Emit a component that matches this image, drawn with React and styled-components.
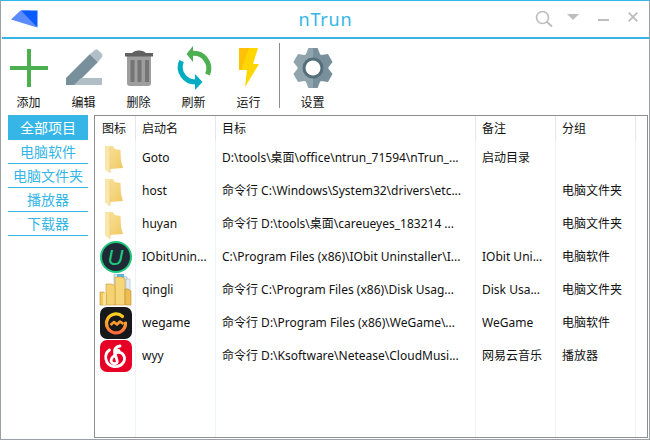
import React from 'react';
import styled, { createGlobalStyle } from 'styled-components';

const Global = createGlobalStyle`
  html, body { margin: 0; padding: 0; width: 650px; height: 440px; overflow: hidden; background: #fff; }
  * { box-sizing: border-box; }
`;

const BLUE = '#35b6e7';
const FONT = '"Noto Sans", "Noto Sans CJK SC", sans-serif';

const Win = styled.div`
  width: 650px; height: 440px; background: #fff;
  border: 1px solid #9aa0a6; border-top: 1px solid ${BLUE};
  display: flex; flex-direction: column; font-family: ${FONT}; font-size: 12px; color: #111;
`;
const TitleBar = styled.header`
  flex: none; margin-left: 1px; display: grid; grid-template-columns: 1fr auto 1fr; align-items: center;
  border-bottom: 2px solid ${BLUE}; height: 38px;
`;
const Logo = styled.svg`width: 28px; height: 18px; margin: 0 0 0 8px; display: block;`;
const Title = styled.h1`
  margin: 0; font: 400 18px ${FONT}; color: ${BLUE}; letter-spacing: 0.8px;
`;
const WinControls = styled.div`display: flex; justify-content: flex-end; align-items: flex-start; height: 100%;`;
const CtrlIcon = styled.svg`
  display: block; flex: none;
  margin-top: ${p => p.$top}px; margin-left: ${p => p.$left || 0}px; margin-right: ${p => p.$right || 0}px;
`;
const Toolbar = styled.nav`
  flex: none; height: 76px; display: flex; align-items: stretch;
`;
const ToolBtn = styled.button`
  all: unset; width: 55px; display: flex; flex-direction: column; align-items: center; padding-top: 9px;
  font: 12px ${FONT}; color: #111; cursor: pointer;
`;
const ToolIcon = styled.svg`width: 40px; height: 40px; overflow: visible; display: block; flex: none;`;
const ToolLabel = styled.span`margin-top: 6px; line-height: 18px;`;
const Divider = styled.div`width: 1px; background: #8c8c8c; margin: 4px 5px 7px 3px;`;
const Body = styled.main`flex: 1; min-height: 0; display: flex; padding: 0 1px 1px 7px; gap: 6px;`;
const Side = styled.aside`width: 80px; flex: none; display: flex; flex-direction: column;`;
const SideItem = styled.div`
  text-align: center; font-size: 14px; flex: none;
  height: ${p => (p.$active ? '25px' : '24px')};
  line-height: ${p => (p.$active ? '25px' : '24px')};
  color: ${p => (p.$active ? '#fff' : BLUE)};
  background: ${p => (p.$active ? BLUE : 'transparent')};
  border-bottom: ${p => (p.$active ? 'none' : `1px solid ${BLUE}`)};
`;
const List = styled.section`
  flex: 1; min-width: 0; border: 1px solid #8f8f8f; position: relative; overflow: hidden;
`;
const cols = '41px 80px 260px 80px 80px 10px';
const Row = styled.div`
  display: grid; grid-template-columns: ${cols}; height: 33px; align-items: stretch;
`;
const Cell = styled.div`
  padding-left: 6px; display: flex; align-items: center; white-space: nowrap; overflow: hidden;
  border-right: 1px solid #edf3f8; line-height: 18px; padding-top: 1px;
  &:last-child { border-right: none; }
`;
const IconCell = styled(Cell)`padding: 0 0 0 5px;`;
const HeaderRow = styled(Row)`height: 25px;`;
const HeaderCell = styled(Cell)`border-right-color: #e4e8ec; padding-top: 0; ${p => p.$first && 'padding-left: 7px;'}`;
const Rules = styled.div`
  display: grid; grid-template-columns: ${cols}; position: absolute; left: 0; right: 0; top: 25px; bottom: 0; pointer-events: none;
`;
const Rule = styled.div`border-right: 1px solid #edf3f8; &:last-child { border-right: none; }`;
const ListIcon = styled.svg`width: 32px; height: 32px; display: block; flex: none; overflow: visible;`;

const gearPath = (() => {
  const c = 20, pts = [];
  for (let i = 0; i < 6; i++) {
    const a = (-90 + i * 60) * Math.PI / 180;
    const p = (r, d) => { const t = a + d * Math.PI / 180; return `${(c + r * Math.cos(t)).toFixed(2)} ${(c + r * Math.sin(t)).toFixed(2)}`; };
    pts.push(p(15.5, -27), p(20.5, -13), p(20.5, 13), p(15.5, 27));
  }
  return 'M' + pts.join('L') + 'Z';
})();

const AddIcon = () => (
  <ToolIcon viewBox="0 0 40 40"><path d="M18 1h4v38h-4zM1 18h38v4H1z" fill="#4caf50" /></ToolIcon>
);
const EditIcon = () => (
  <ToolIcon viewBox="0 0 40 40">
    <path d="M2 30h36v7H2z" fill="#b0bec5" />
    <path d="M2 30h15l-7 7H2z" fill="#78909c" />
    <path d="M2 30 26 6l8 8-16 16z" fill="#78909c" />
    <path d="M26 6l5-4c1-.6 2-.6 3 0l4 4c.6 1 .6 2 0 3l-4 5z" fill="#b0bec5" />
  </ToolIcon>
);
const TrashIcon = () => (
  <ToolIcon viewBox="0 0 40 40">
    <path d="M8 8h24v27a3 3 0 0 1-3 3H11a3 3 0 0 1-3-3z" fill="#9e9e9e" />
    <path d="M11.500 12h4v22h-4zM18.500 12h4v22h-4zM26 12h4v22h-4z" fill="#757575" />
    <path d="M6 5h7q2-2.500 6-2.500h2q4 0 6 2.500h7v3.500H6z" fill="#616161" />
  </ToolIcon>
);
const RefreshIcon = () => (
  <ToolIcon viewBox="0 0 40 40">
    <path d="M18 5.500A15 15 0 0 1 33.500 26.500" fill="none" stroke="#4caf50" strokeWidth="5" />
    <path d="M12.500 6 19 -2V14z" fill="#4caf50" />
    <path d="M22 34A15 15 0 0 1 7.500 13" fill="none" stroke="#00acc1" strokeWidth="5" />
    <path d="M28.500 34 21 26V42z" fill="#00acc1" />
  </ToolIcon>
);
const BoltIcon = () => (
  <ToolIcon viewBox="0 0 40 40">
    <path d="M10 0H29L24 16H30L16 39 18 22H10z" fill="#ffd600" />
    <path d="M10 0H20L12 22H10z" fill="#ffc107" />
  </ToolIcon>
);
const GearIcon = () => (
  <ToolIcon viewBox="0 0 40 40">
    <defs>
      <linearGradient id="gearFill" x1="0" x2="1" y1="0" y2="0">
        <stop offset="0.5" stopColor="#90a4ae" /><stop offset="0.5" stopColor="#78909c" />
      </linearGradient>
    </defs>
    <path d={gearPath} fill="url(#gearFill)" />
    <circle cx="20" cy="20" r="10.500" fill="#546e7a" />
    <circle cx="20" cy="20" r="7.500" fill="#fff" />
  </ToolIcon>
);

const FolderIcon = () => (
  <ListIcon viewBox="0 0 32 32">
    <defs>
      <linearGradient id="fold" x1="0" x2="1" y1="0" y2="1">
        <stop offset="0" stopColor="#fbe49c" /><stop offset="1" stopColor="#efc660" />
      </linearGradient>
    </defs>
    <path d="M5 4H13L14.500 7 20.500 8 21 19 23 26 10 27V31L5 27z" fill="url(#fold)" />
    <path d="M5 4H10V31L5 27z" fill="#fae6a8" />
    <path d="M10 5V31" stroke="#e8c878" strokeWidth="0.600" />
  </ListIcon>
);
const IObitIcon = () => (
  <ListIcon viewBox="0 0 32 32">
    <circle cx="16" cy="16" r="15" fill="#1f2a36" stroke="#20c67a" strokeWidth="2" />
    <text x="15.500" y="23.500" textAnchor="middle" fontFamily="Liberation Sans, sans-serif" fontStyle="italic" fontSize="22" fill="#1fca7c">U</text>
  </ListIcon>
);
const ClusterIcon = () => (
  <ListIcon viewBox="0 0 32 32">
    <path d="M14 0l13 3v14H14z" fill="#d8e8f0" stroke="#93aebc" strokeWidth="0.600" />
    <path d="M17 0h7v5h-7z" fill="#5fb4d8" />
    <path d="M26 5h4v20h-4z" fill="#e6eef3" stroke="#93aebc" strokeWidth="0.500" />
    <path d="M15 3h7l3 2v26H15z" fill="#f7d67a" stroke="#c79a3c" strokeWidth="0.600" />
    <path d="M25 15h3l3 2v14h-6z" fill="#eebd50" stroke="#b98e30" strokeWidth="0.600" />
    <path d="M6 10h6l3 2v19H6z" fill="#f5d272" stroke="#c79a3c" strokeWidth="0.600" />
    <path d="M0 18h3l3 1.500V31H0z" fill="#f2c95e" stroke="#b98e30" strokeWidth="0.600" />
    <path d="M3 19.500 6 18V31H3z" fill="#f9e299" />
  </ListIcon>
);
const WeGameIcon = () => (
  <ListIcon viewBox="0 0 32 32">
    <defs>
      <linearGradient id="wg" x1="0" x2="0" y1="0" y2="1">
        <stop offset="0" stopColor="#ffd21f" /><stop offset="1" stopColor="#ff6a3c" />
      </linearGradient>
    </defs>
    <rect width="32" height="32" rx="7" fill="#17181a" />
    <path d="M22.500 9.500A9.500 9.500 0 1 0 25.500 16" fill="none" stroke="url(#wg)" strokeWidth="3.200" strokeLinecap="round" />
    <path d="M10.500 18l3.500-3 3 2.500 3-3 3.500 2.500" fill="none" stroke="#ff9a2e" strokeWidth="2.600" strokeLinejoin="round" />
  </ListIcon>
);
const MusicIcon = () => (
  <ListIcon viewBox="0 0 32 32">
    <rect width="32" height="32" rx="7" fill="#e60026" />
    <path d="M20 6c-4.500 .8-6 3.500-5.300 6.500l2.500 8.500c.8 2.500-3.800 3.800-5.500 1.300-1.500-2.300.2-5.500 3-6.500"
      fill="none" stroke="#fff" strokeWidth="2.800" strokeLinecap="round" />
    <path d="M9.500 10c-6 4-5 15 4.500 16.500 8 1 12.500-6 9.500-11.500-2.500-3.800-8-3-8.800-.5M14.700 12.500c.6-2.500 4-3.200 4.800-.8"
      fill="none" stroke="#fff" strokeWidth="2.800" strokeLinecap="round" />
  </ListIcon>
);

const tools = [
  ['添加', AddIcon], ['编辑', EditIcon], ['删除', TrashIcon], ['刷新', RefreshIcon], ['运行', BoltIcon],
];
const rows = [
  [FolderIcon, 'Goto', 'D:\\tools\\桌面\\office\\ntrun_71594\\nTrun_...', '启动目录', ''],
  [FolderIcon, 'host', '命令行 C:\\Windows\\System32\\drivers\\etc...', '', '电脑文件夹'],
  [FolderIcon, 'huyan', '命令行 D:\\tools\\桌面\\careueyes_183214 ...', '', '电脑文件夹'],
  [IObitIcon, 'IObitUnin...', 'C:\\Program Files (x86)\\IObit Uninstaller\\I...', 'IObit Uni...', '电脑软件'],
  [ClusterIcon, 'qingli', '命令行 C:\\Program Files (x86)\\Disk Usag...', 'Disk Usa...', '电脑文件夹'],
  [WeGameIcon, 'wegame', '命令行 D:\\Program Files (x86)\\WeGame\\...', 'WeGame', '电脑软件'],
  [MusicIcon, 'wyy', '命令行 D:\\Ksoftware\\Netease\\CloudMusi...', '网易云音乐', '播放器'],
];
const groups = ['全部项目', '电脑软件', '电脑文件夹', '播放器', '下载器'];

export default function App() {
  return (
    <Win>
      <Global />
      <TitleBar>
        <Logo viewBox="0 0 28 18">
          <path d="M1 9.500 10.500 0.500H20L27 17.500z" fill="#5b8cff" />
          <path d="M11 0.500H27.500V17.500z" fill="#0a5cff" />
        </Logo>
        <Title>nTrun</Title>
        <WinControls>
          <CtrlIcon $top={9} width="18" height="18" viewBox="0 0 18 18">
            <circle cx="7.500" cy="7.500" r="6" fill="none" stroke="#bdbdbd" strokeWidth="1.600" />
            <path d="M11.800 11.800 17 16.500" stroke="#bdbdbd" strokeWidth="2" />
          </CtrlIcon>
          <CtrlIcon $top={13} $left={14} width="12" height="6" viewBox="0 0 12 6">
            <path d="M0 0H12L6 6z" fill="#bdbdbd" />
          </CtrlIcon>
          <CtrlIcon $top={18} $left={19} width="11" height="2" viewBox="0 0 11 2">
            <path d="M0 0H11V2H0z" fill="#bdbdbd" />
          </CtrlIcon>
          <CtrlIcon $top={11} $left={19} $right={11} width="10" height="10" viewBox="0 0 10 10">
            <path d="M.7 .7 9.300 9.300M9.300 .7 .7 9.300" stroke="#bdbdbd" strokeWidth="1.800" />
          </CtrlIcon>
        </WinControls>
      </TitleBar>
      <Toolbar>
        {tools.map(([label, Icon]) => (
          <ToolBtn key={label}><Icon /><ToolLabel>{label}</ToolLabel></ToolBtn>
        ))}
        <Divider />
        <ToolBtn><GearIcon /><ToolLabel>设置</ToolLabel></ToolBtn>
      </Toolbar>
      <Body>
        <Side>
          {groups.map((g, i) => <SideItem key={g} $active={i === 0}>{g}</SideItem>)}
        </Side>
        <List>
          <Rules>{[0, 1, 2, 3, 4, 5].map(i => <Rule key={i} />)}</Rules>
          <HeaderRow>
            {['图标', '启动名', '目标', '备注', '分组', ''].map((h, i) => (
              <HeaderCell key={i} $first={i === 0}>{h}</HeaderCell>
            ))}
          </HeaderRow>
          {rows.map(([Icon, name, target, note, group]) => (
            <Row key={name}>
              <IconCell><Icon /></IconCell>
              <Cell>{name}</Cell>
              <Cell>{target}</Cell>
              <Cell>{note}</Cell>
              <Cell>{group}</Cell>
              <Cell />
            </Row>
          ))}
        </List>
      </Body>
    </Win>
  );
}
